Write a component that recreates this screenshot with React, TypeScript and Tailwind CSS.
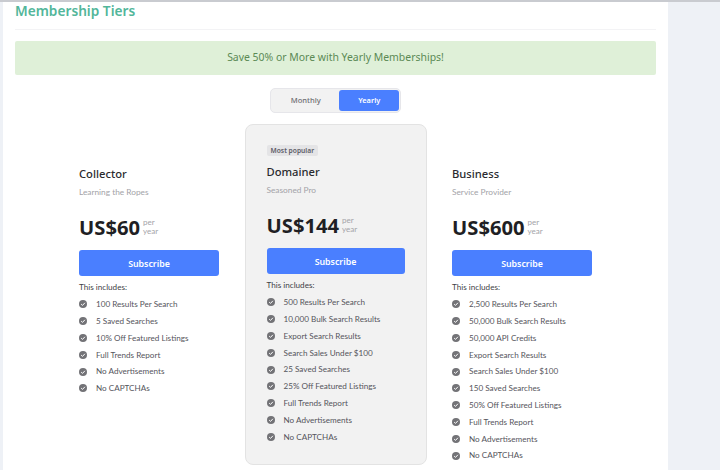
const tiers = [
  { name: "Collector", sub: "Learning the Ropes", price: "US$60", items: ["100 Results Per Search","5 Saved Searches","10% Off Featured Listings","Full Trends Report","No Advertisements","No CAPTCHAs"] },
  { name: "Domainer", sub: "Seasoned Pro", price: "US$144", popular: true, items: ["500 Results Per Search","10,000 Bulk Search Results","Export Search Results","Search Sales Under $100","25 Saved Searches","25% Off Featured Listings","Full Trends Report","No Advertisements","No CAPTCHAs"] },
  { name: "Business", sub: "Service Provider", price: "US$600", items: ["2,500 Results Per Search","50,000 Bulk Search Results","50,000 API Credits","Export Search Results","Search Sales Under $100","150 Saved Searches","50% Off Featured Listings","Full Trends Report","No Advertisements","No CAPTCHAs"] },
];

function Check() {
  return (
    <svg viewBox="0 0 16 16" className="w-[8px] h-[8px] shrink-0" aria-hidden="true">
      <circle cx="8" cy="8" r="8" fill="#737377" />
      <path d="M4.3 8.2 7 10.8 11.8 5.6" fill="none" stroke="#ffffff" strokeWidth="2" />
    </svg>
  );
}

function Tier({ t }: { t: (typeof tiers)[number] }) {
  return (
    <div className={t.popular
      ? "w-[182px] h-[341px] px-[21px] pt-[20px] bg-[#f2f2f2] border border-[#e3e3e3] rounded-[8px]"
      : "w-[182px] mt-[41px] px-[21px]"}>
      {t.popular && (
        <div className="h-[11px] mb-[7px] flex">
          <span className="px-[4px] h-[11px] leading-[11px] rounded-[2px] bg-[#e4e4e6] text-[6.7px] font-semibold text-[#5c5c66]">Most popular</span>
        </div>
      )}
      <div className="text-[11.2px] leading-[17px] font-medium text-[#2a2a2e]">{t.name}</div>
      <div className="mt-[5px] font-['Lato',sans-serif] text-[8.3px] leading-[11px] text-[#a3a3a8]">{t.sub}</div>
      <div className="mt-[14px] flex items-center h-[30px]">
        <span className="text-[20.2px] leading-[30px] font-bold text-[#1f1f24]">{t.price}</span>
        <span className="ml-[3px] font-['Lato',sans-serif] text-[8px] leading-[9px] text-[#a3a3a8]">per<br />year</span>
      </div>
      <div className="mt-[8px] h-[26px] pt-[3px] flex items-center justify-center rounded-[3px] bg-[#4a7fff] text-white text-[8.8px] font-semibold">Subscribe</div>
      <div className="mt-[6px] font-['Lato',sans-serif] text-[8.15px] leading-[11px] text-[#3f3f46]">This includes:</div>
      <ul className="mt-[3px] font-['Lato',sans-serif]">
        {t.items.map((i) => (
          <li key={i} className="h-[16.8px] flex items-center gap-[9px] text-[8.15px] text-[#55555c]">
            <Check />
            <span>{i}</span>
          </li>
        ))}
      </ul>
    </div>
  );
}

export default function App() {
  return (
    <div className="h-[470px] w-[720px] overflow-hidden flex pl-[3px] bg-[#eef1f6] font-['Noto_Sans',sans-serif] border-t-2 border-[#c9cbd0]">
      <main className="w-[665px] h-full bg-white pl-[12px] pr-[12px]">
        <h1 className="h-[28px] pt-[1px] leading-[16px] text-[13.7px] font-semibold text-[#52b69a] border-b border-[#f3f3f5]">Membership Tiers</h1>
        <div className="mt-[11px] h-[34px] flex items-center justify-center rounded-[2px] bg-[#dff0d8] text-[#5b8a55] text-[10.45px]">Save 50% or More with Yearly Memberships!</div>
        <div className="mt-[13px] flex justify-center">
          <div className="w-[131px] h-[25px] p-[1px] flex rounded-[5px] bg-[#f2f2f2] border border-[#e6e6ea]">
            <div className="w-[68px] flex items-center justify-center text-[7.6px] font-medium text-[#6f6f73]">Monthly</div>
            <div className="w-[60px] flex items-center justify-center rounded-[3px] bg-[#4a7fff] text-white text-[7.4px] font-semibold">Yearly</div>
          </div>
        </div>
        <div className="mt-[11px] flex justify-center gap-[4.5px]">
          {tiers.map((t) => <Tier key={t.name} t={t} />)}
        </div>
      </main>
    </div>
  );
}
